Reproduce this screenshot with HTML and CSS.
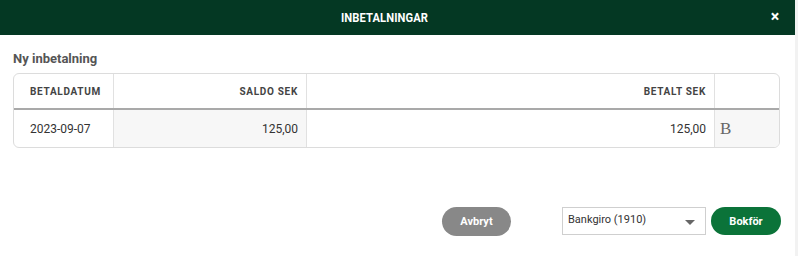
FILE: index.html
```html
<!DOCTYPE html>
<html lang="sv">
<head>
<meta charset="utf-8">
<title>Inbetalningar</title>
<link rel="stylesheet" href="styles.css">
</head>
<body>
<div class="modal">
  <header class="modal-header">
    <span class="modal-title">INBETALNINGAR</span>
    <span class="modal-close">×</span>
  </header>
  <section class="modal-body">
    <h2 class="section-title">Ny inbetalning</h2>
    <div class="table">
      <div class="row head">
        <div class="cell c1">BETALDATUM</div>
        <div class="cell c2 right">SALDO SEK</div>
        <div class="cell c3 right">BETALT SEK</div>
        <div class="cell c4"></div>
      </div>
      <div class="row body">
        <div class="cell c1">2023-09-07</div>
        <div class="cell c2 right shaded">125,00</div>
        <div class="cell c3 right">125,00</div>
        <div class="cell c4 shaded mark">B</div>
      </div>
    </div>
  </section>
  <footer class="modal-footer">
    <button class="btn btn-cancel">Avbryt</button>
    <div class="select">
      <span>Bankgiro (1910)</span>
      <span class="caret"></span>
    </div>
    <button class="btn btn-book">Bokför</button>
  </footer>
</div>
</body>
</html>
```
FILE: styles.css
```css
* { box-sizing: border-box; }
html, body { margin: 0; padding: 0; background: #fff; }
body {
  width: 798px;
  height: 256px;
  overflow: hidden;
  font-family: Roboto, "Liberation Sans", Arial, sans-serif;
  color: #333;
  background: #f2f2f2;
}
.modal {
  width: 795px;
  height: 256px;
  background: #fff;
  display: flex;
  flex-direction: column;
}
.modal-header {
  height: 35px;
  background: #043823;
  display: flex;
  align-items: center;
  padding-right: 14px;
}
.modal-title {
  flex: 1;
  text-align: center;
  color: #fff;
  font-weight: 700;
  font-size: 12px;
  letter-spacing: 0.1px;
  transform: scaleX(0.93);
}
.modal-close {
  width: 12px;
  text-align: center;
  color: #fff;
  font-weight: 700;
  font-size: 16px;
  line-height: 18px;
  margin-top: -2px;
}
.modal-body {
  padding: 15px 15px 0 13px;
}
.section-title {
  margin: 0 0 6px 0;
  font-size: 13px;
  font-weight: 700;
  color: #555;
  line-height: 17px;
}
.table {
  width: 767px;
  border: 1px solid #dcdcdc;
  border-radius: 6px;
  overflow: hidden;
}
.row { display: flex; }
.row.head { height: 36px; border-bottom: 2px solid #a9a9a9; }
.row.body { height: 37px; }
.cell {
  display: flex;
  align-items: center;
  padding: 0 8px 0 16px;
  border-right: 1px solid #e1e1e1;
}
.cell:last-child { border-right: none; }
.head .cell {
  font-size: 10px;
  font-weight: 700;
  color: #444;
  letter-spacing: 0.7px;
}
.body .cell { font-size: 12px; color: #333; }
.c1 { width: 100px; }
.c2 { width: 193px; }
.c3 { width: 408px; }
.c4 { flex: 1; padding-left: 5px; }
.right { justify-content: flex-end; }
.shaded { background: #f7f7f7; }
.body .mark {
  font-family: "Liberation Serif", "Times New Roman", serif;
  font-size: 17px;
  font-weight: 400;
  color: #666;
}
.modal-footer {
  margin-top: 59px;
  display: flex;
  align-items: flex-start;
  padding-left: 442px;
}
.btn {
  border: none;
  border-radius: 15px;
  font-family: Roboto, "Liberation Sans", Arial, sans-serif;
  font-weight: 700;
  font-size: 11px;
  color: #fff;
  padding: 0;
}
.btn-cancel {
  width: 69px;
  height: 29px;
  background: #888888;
  margin-right: 51px;
}
.btn-book {
  width: 70px;
  height: 28px;
  background: #0b7339;
  margin-left: 5px;
}
.select {
  width: 144px;
  height: 28px;
  border: 1px solid #cfcfcf;
  display: flex;
  align-items: flex-start;
  justify-content: space-between;
  padding: 5px 10px 0 5px;
  font-size: 11px;
  color: #333;
}
.caret {
  margin-top: 7px;
  width: 0;
  height: 0;
  border-left: 5px solid transparent;
  border-right: 5px solid transparent;
  border-top: 5px solid #666;
}
```
